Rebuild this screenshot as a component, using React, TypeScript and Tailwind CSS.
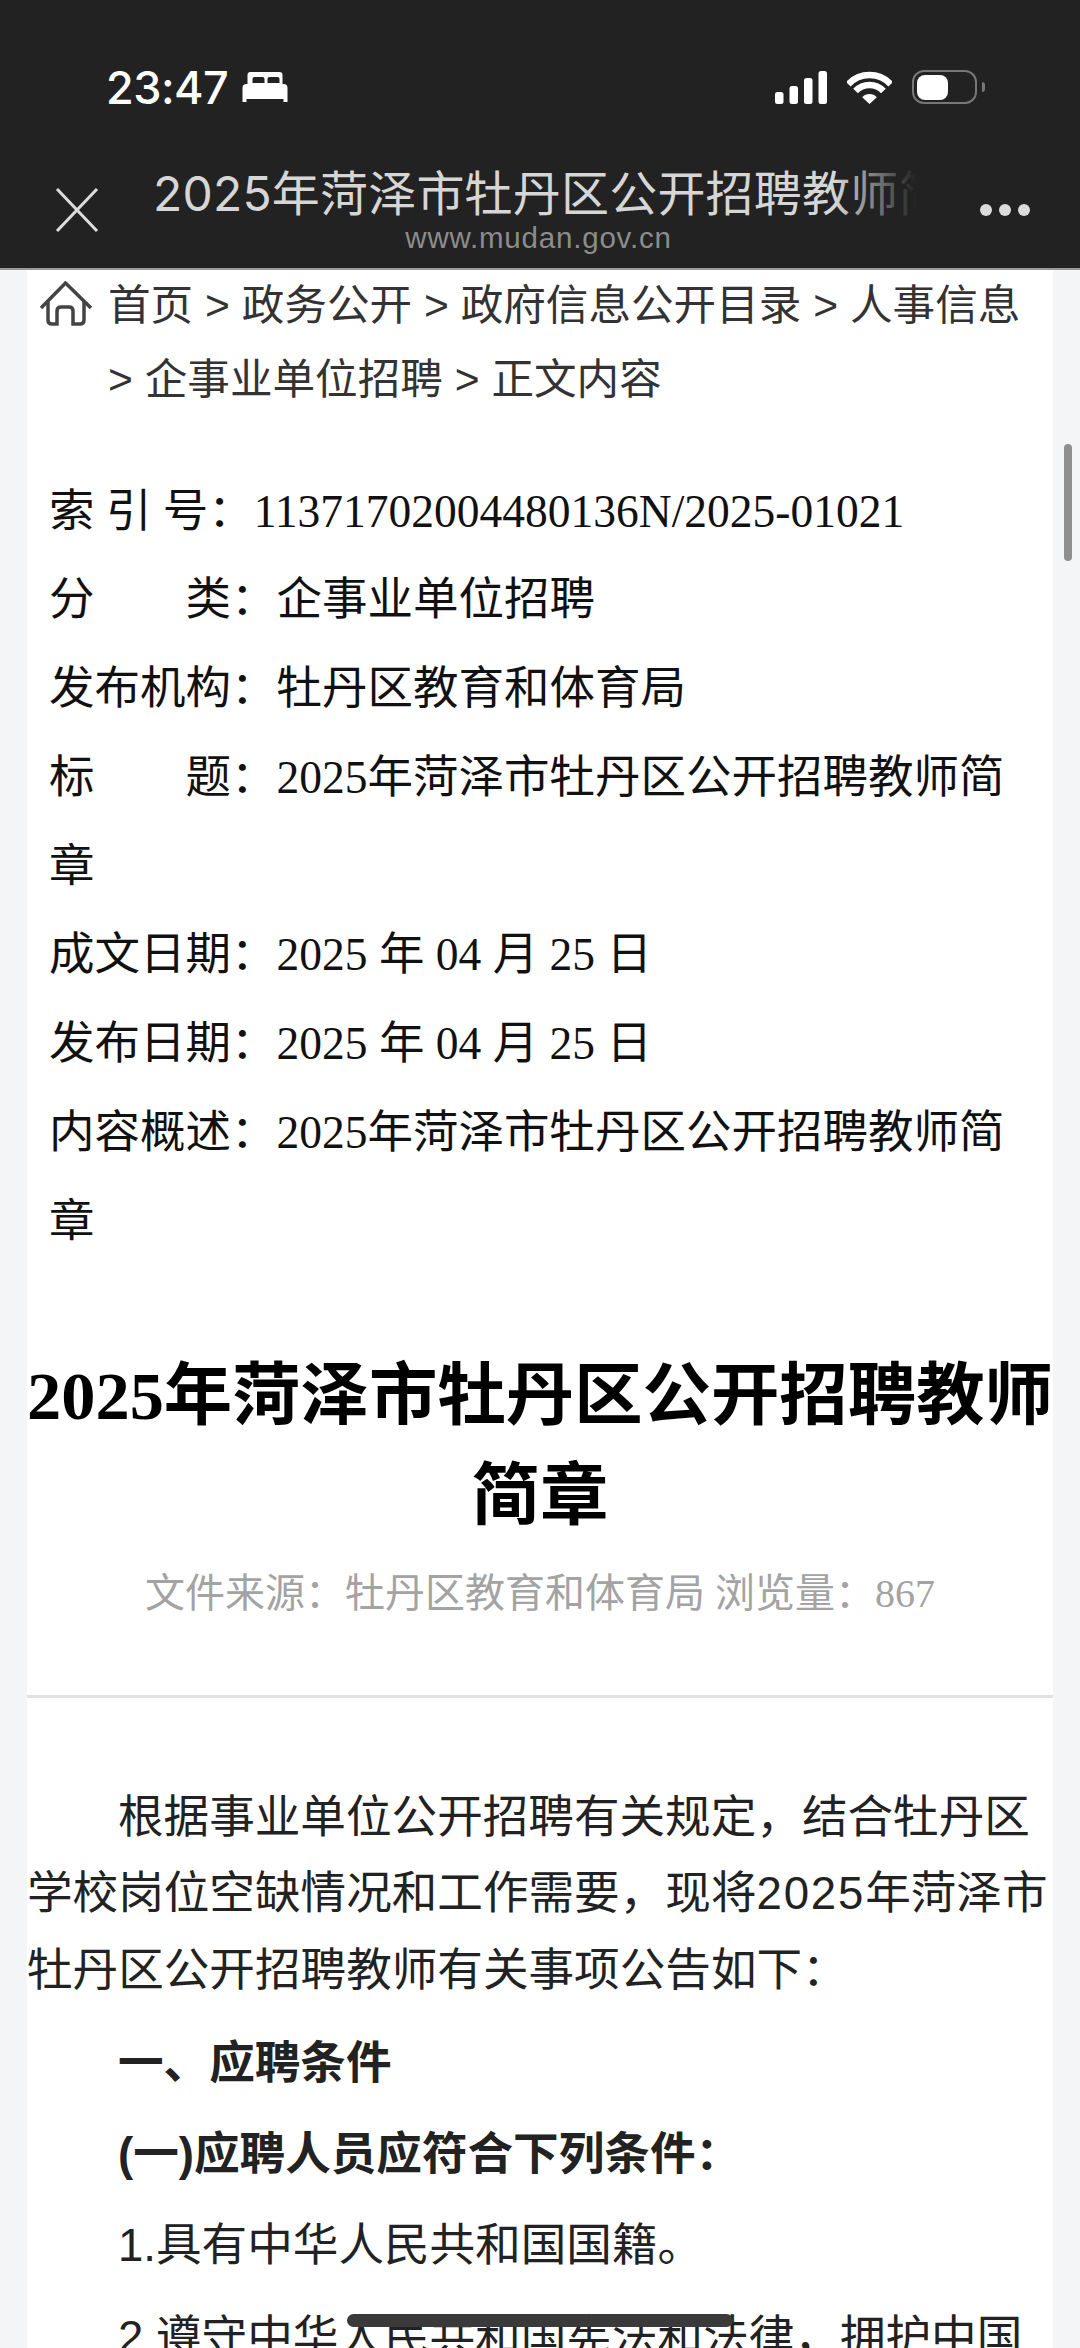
const metaRows = [
  { label: '索 引 号：', value: '11371702004480136N/2025-01021' },
  { label: '分　　类：', value: '企事业单位招聘' },
  { label: '发布机构：', value: '牡丹区教育和体育局' },
  { label: '标　　题：', value: '2025年菏泽市牡丹区公开招聘教师简章' },
  { label: '成文日期：', value: '2025 年 04 月 25 日' },
  { label: '发布日期：', value: '2025 年 04 月 25 日' },
  { label: '内容概述：', value: '2025年菏泽市牡丹区公开招聘教师简章' },
];

function StatusBar() {
  return (
    <div className="flex h-[54px] items-center justify-between pl-[106px] pr-[95px] text-white">
      <div className="flex items-center gap-[14px]">
        <span className="text-[45px] font-medium leading-none font-['Inter',sans-serif] tracking-[-0.5px]">23:47</span>
        <svg width="46" height="30" viewBox="0 0 45 30" fill="white" fillRule="evenodd">
          <path d="M8 0h29a3 3 0 0 1 3 3v9H5V3a3 3 0 0 1 3-3zM12 5a2 2 0 0 0-2 2v4h12V7a2 2 0 0 0-2-2zM27 5a2 2 0 0 0-2 2v4h12V7a2 2 0 0 0-2-2z" />
          <path d="M4 12h37a4 4 0 0 1 4 4v14h-4v-3H4v3H0V16a4 4 0 0 1 4-4z" />
        </svg>
      </div>
      <div className="flex items-center">
        <svg width="52" height="33" viewBox="0 0 52 33" fill="white">
          <rect x="0" y="21" width="8.5" height="12" rx="2.5" />
          <rect x="14.5" y="15" width="8.5" height="18" rx="2.5" />
          <rect x="29" y="7" width="8.5" height="26" rx="2.5" />
          <rect x="43.5" y="0" width="8.5" height="33" rx="2.5" />
        </svg>
        <svg className="ml-[20px]" width="45" height="33" viewBox="0 0 45 33" fill="none" stroke="white" strokeWidth="6.5">
          <path d="M1.3 13.2A29 29 0 0 1 43.7 13.2" />
          <path d="M8.6 20A19 19 0 0 1 36.4 20" />
          <path d="M22.5 33L15.2 26.2A10 10 0 0 1 29.8 26.2Z" fill="white" stroke="none" />
        </svg>
        <div className="ml-[20px] flex items-center">
          <div className="flex h-[34px] w-[65px] items-center rounded-[12px] border-[2.5px] border-[#777777] p-[2.5px]">
            <div className="h-full w-[31px] rounded-[8px] bg-white" />
          </div>
          <div className="ml-[5px] h-[10px] w-[3px] rounded-r-full bg-[#777777]" />
        </div>
      </div>
    </div>
  );
}

function NavBar() {
  return (
    <div className="relative mt-[21px] flex h-[133px] items-start">
      <svg className="ml-[55px] mt-[53px] shrink-0" width="44" height="44" viewBox="0 0 44 44" stroke="#dcdcdc" strokeWidth="3" fill="none">
        <path d="M2 1l40 42M42 1L2 43" />
      </svg>
      <div className="ml-[54px] mt-[28px] w-[772px] min-w-0">
        <div className="relative h-[62px] overflow-hidden">
          <div className="whitespace-nowrap text-[48px] leading-[62px] text-[#d6d6d6] tracking-[0.2px] font-['Inter','Noto_Sans_CJK_SC',sans-serif]">
            2025年菏泽市牡丹区公开招聘教师简章
          </div>
          <div className="absolute inset-y-0 right-0 w-[90px] bg-gradient-to-r from-transparent to-[#222222] to-90%" />
        </div>
      </div>
      <div className="absolute left-0 right-0 top-[85px] pr-[3px] text-center text-[29.5px] leading-[36px] text-[#8c8c8c] tracking-[0.8px] font-['Liberation_Sans',sans-serif]">
        www.mudan.gov.cn
      </div>
      <div className="absolute right-[50px] top-[69px] flex gap-[7px]">
        <div className="h-[12px] w-[12px] rounded-full bg-[#dcdcdc]" />
        <div className="h-[12px] w-[12px] rounded-full bg-[#dcdcdc]" />
        <div className="h-[12px] w-[12px] rounded-full bg-[#dcdcdc]" />
      </div>
    </div>
  );
}

function Breadcrumb() {
  return (
    <div className="-mt-[1px] flex items-start pl-[13px] pr-[18px] text-[42.6px] leading-[73.5px] text-[#333333]">
      <svg className="mt-[12px] shrink-0" width="52" height="45" viewBox="0 0 52 45" fill="none" stroke="#444444" strokeWidth="3.5">
        <path d="M1 27L25.5 2L51 27" />
        <path d="M8 21V39q0 4 4 4h5V30q0-4 4-4h8q4 0 4 4V43h7q4 0 4-4V21" />
      </svg>
      <div className="ml-[16px] font-['Liberation_Sans','Noto_Sans_CJK_SC',sans-serif]">
        首页 &gt; 政务公开 &gt; 政府信息公开目录 &gt; 人事信息 &gt; 企事业单位招聘 &gt; 正文内容
      </div>
    </div>
  );
}

export default function App() {
  return (
    <div className="relative h-[2348px] overflow-hidden bg-[#f3f5f7] font-['Liberation_Sans','Noto_Sans_CJK_SC',sans-serif]">
      <header className="h-[270px] border-b-[2px] border-[#999999] bg-[#222222] pt-[60px]">
        <StatusBar />
        <NavBar />
      </header>

      <main className="mx-[27px] h-[2078px] overflow-hidden bg-white">
        <Breadcrumb />

        <section className="mt-[51.5px] pl-[22px] pr-[20px] text-[45.5px] leading-[88.75px] text-[#111111] font-['Liberation_Serif','Noto_Sans_CJK_SC',serif]">
          {metaRows.map((row) => (
            <div key={row.label}>
              {row.label}
              {row.value}
            </div>
          ))}
        </section>

        <h1 className="mt-[79.5px] text-center text-[68.4px] font-bold leading-[100px] text-black font-['Liberation_Serif','Noto_Sans_CJK_SC',serif]">
          2025年菏泽市牡丹区公开招聘教师简章
        </h1>

        <div className="mt-[18px] text-center text-[40px] leading-[60px] text-[#a3a3a3] font-['Liberation_Serif','Noto_Sans_CJK_SC',serif]">
          文件来源：牡丹区教育和体育局 浏览量：867
        </div>

        <hr className="mt-[71px] border-t-[3px] border-[#e2e2e2]" />

        <article className="mt-[82px] text-[45.6px] leading-[76.5px] text-[#222222]">
          <p className="mb-[17px] indent-[91px]">
            根据事业单位公开招聘有关规定，结合牡丹区学校岗位空缺情况和工作需要，现将<span className="tracking-[1.8px]">2025</span>年菏泽市牡丹区公开招聘教师有关事项公告如下：
          </p>
          <p className="mb-[14px] indent-[91px] font-bold">一、应聘条件</p>
          <p className="mb-[15px] indent-[91px] font-bold">(一)应聘人员应符合下列条件：</p>
          <p className="mb-[15px] indent-[91px]">1.具有中华人民共和国国籍。</p>
          <p className="indent-[91px]">2.遵守中华人民共和国宪法和法律，拥护中国共产党领导和社会主义制度。</p>
        </article>
      </main>

      <div className="absolute right-[8px] top-[444px] h-[117px] w-[8px] rounded-full bg-[#8f8f8f]" />
      <div className="absolute bottom-[21px] left-[347px] h-[13px] w-[386px] rounded-[7px] bg-[#3a3a3a]" />
    </div>
  );
}
